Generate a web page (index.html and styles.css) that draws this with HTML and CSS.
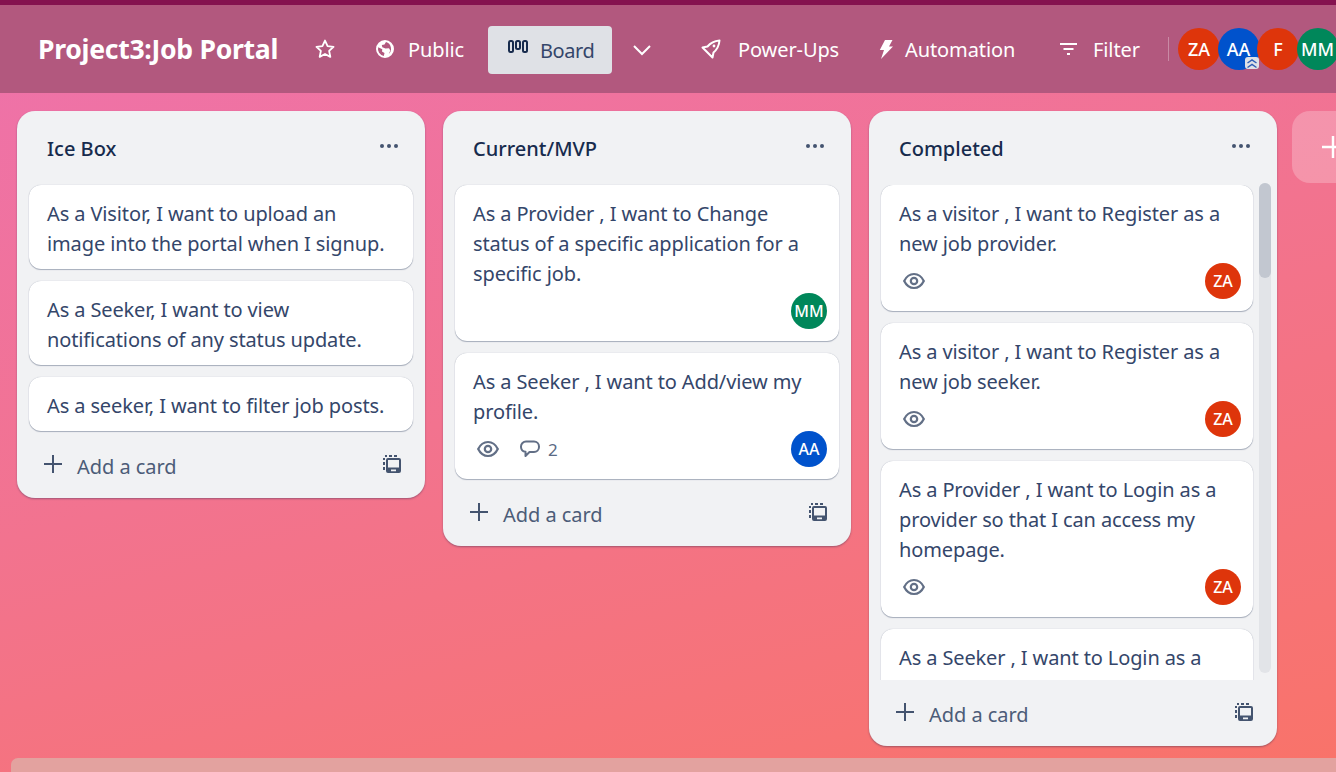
FILE: index.html
```html
<!DOCTYPE html>
<html lang="en">
<head>
<meta charset="utf-8">
<title>Project3:Job Portal</title>
<link rel="stylesheet" href="styles.css">
</head>
<body>
<svg class="defs" width="0" height="0" aria-hidden="true">
  <symbol id="eye" viewBox="0 0 24 24"><path d="M2.200 12c2.300-4.700 5.500-7 9.800-7s7.500 2.300 9.800 7c-2.300 4.700-5.500 7-9.800 7s-7.500-2.300-9.800-7Z" fill="none" stroke="currentColor" stroke-width="2.200"/><circle cx="12" cy="12" r="3.200" fill="none" stroke="currentColor" stroke-width="2.200"/></symbol>
  <symbol id="template" viewBox="0 0 18 18"><path d="M2 1h2M6 1h3M11 1h3M1 3v2M1 7v3M1 12v3" fill="none" stroke="currentColor" stroke-width="2"/><path d="M5 3h11a2 2 0 0 1 2 2v11a2 2 0 0 1-2 2H5a2 2 0 0 1-2-2V5a2 2 0 0 1 2-2Zm0 2v7.500h11V5Zm3 9.500v1.800h5v-1.800Z" fill="currentColor" fill-rule="evenodd"/></symbol>
  <symbol id="plus" viewBox="0 0 18 18"><path d="M9 0v18M0 9h18" stroke="currentColor" stroke-width="2" fill="none"/></symbol>
  <symbol id="dots" viewBox="0 0 20 6"><circle cx="3" cy="3" r="2" fill="currentColor"/><circle cx="10" cy="3" r="2" fill="currentColor"/><circle cx="17" cy="3" r="2" fill="currentColor"/></symbol>
</svg>

<header class="topbar">
  <h1 class="board-name">Project3:Job Portal</h1>
  <svg class="ico ico-star" viewBox="0 0 24 24"><path d="M12 2.800l2.800 6 6.500.8-4.800 4.500 1.300 6.500-5.800-3.200-5.800 3.200 1.300-6.500-4.800-4.500 6.500-.8Z" fill="none" stroke="currentColor" stroke-width="2" stroke-linejoin="round"/></svg>
  <div class="nav-item nav-public">
    <svg class="ico ico-globe" viewBox="0 0 20 20"><path fill="currentColor" fill-rule="evenodd" d="M10 1a9 9 0 1 1 0 18 9 9 0 0 1 0-18ZM3.200 8.200A7 7 0 0 0 8.800 16.900l.7-2.900-2.500-1.500.3-2.300ZM11 3.100l-1.500 2.400-2.700.6.500 2.200 3.200 1.200 3.500-.2 1.300 2.300-1.500 3.300A7 7 0 0 0 11 3.100Z"/></svg>
    <span>Public</span>
  </div>
  <div class="view-tab">
    <svg class="ico-board" viewBox="0 0 20 14"><rect x="1" y="1" width="4" height="11" rx="1.500"/><rect x="8" y="1" width="4" height="8" rx="1.500"/><rect x="15" y="1" width="4" height="11" rx="1.500"/></svg>
    <span>Board</span>
  </div>
  <svg class="ico-chevron" viewBox="0 0 20 12"><path d="M2 2l8 8 8-8" fill="none" stroke="currentColor" stroke-width="2"/></svg>
  <div class="nav-item nav-power">
    <svg class="ico ico-rocket" viewBox="0 0 20 20"><path d="M18.500 1.500C13 2 9 4.500 6.500 7.500l-5 1 4 4 2 2 4 4 1-5c3-2.500 5.500-6.500 6-12Z" fill="none" stroke="currentColor" stroke-width="2" stroke-linejoin="round"/><circle cx="13" cy="7" r="1.400" fill="currentColor"/></svg>
    <span>Power-Ups</span>
  </div>
  <div class="nav-item nav-auto">
    <svg class="ico-bolt" viewBox="0 0 14 19"><path d="M6 0h7.500L10 6.500h4L2 19l3-9H.8Z" fill="currentColor"/></svg>
    <span>Automation</span>
  </div>
  <div class="nav-item nav-filter">
    <svg class="ico-filter" viewBox="0 0 17 12"><path d="M0 1h17M3.500 6h10M7 11h3" fill="none" stroke="currentColor" stroke-width="1.800"/></svg>
    <span>Filter</span>
  </div>
  <div class="divider"></div>
  <div class="members">
    <div class="avatar big red">ZA</div>
    <div class="avatar big blue">AA
      <svg class="admin" viewBox="0 0 14 12"><rect width="14" height="12" rx="3" fill="#dfe1e6"/><path d="M2.500 6l4.500-3 4.500 3M2.500 10.500L7 7.500l4.500 3" fill="none" stroke="#2f5fb8" stroke-width="1.500"/></svg>
    </div>
    <div class="avatar big red">F</div>
    <div class="avatar big green">MM</div>
  </div>
</header>

<main class="board">
  <section class="list">
    <div class="list-head"><h2>Ice Box</h2><svg class="dots"><use href="#dots"/></svg></div>
    <div class="cards">
      <article class="card"><p>As a Visitor, I want to upload an image into the portal when I signup.</p></article>
      <article class="card"><p>As a Seeker, I want to view notifications of any status update.</p></article>
      <article class="card"><p>As a seeker, I want to filter job posts.</p></article>
    </div>
    <div class="list-foot"><svg class="plus"><use href="#plus"/></svg><span>Add a card</span><svg class="template"><use href="#template"/></svg></div>
  </section>

  <section class="list">
    <div class="list-head"><h2>Current/MVP</h2><svg class="dots"><use href="#dots"/></svg></div>
    <div class="cards">
      <article class="card"><p>As a Provider , I want to Change status of a specific application for a specific job.</p>
        <div class="badges"><div class="avatar green">MM</div></div></article>
      <article class="card"><p>As a Seeker , I want to Add/view my profile.</p>
        <div class="badges">
          <svg class="eye"><use href="#eye"/></svg>
          <svg class="comment" viewBox="0 0 20 18"><path d="M6 1.500h8a5 5 0 0 1 5 5v.5a5 5 0 0 1-5 5H9.500L5.500 16v-4.200A5 5 0 0 1 1 7v-.5a5 5 0 0 1 5-5Z" fill="none" stroke="currentColor" stroke-width="2" stroke-linejoin="round"/></svg>
          <span class="count">2</span>
          <div class="avatar blue">AA</div>
        </div></article>
    </div>
    <div class="list-foot"><svg class="plus"><use href="#plus"/></svg><span>Add a card</span><svg class="template"><use href="#template"/></svg></div>
  </section>

  <section class="list list-scroll">
    <div class="list-head"><h2>Completed</h2><svg class="dots"><use href="#dots"/></svg></div>
    <div class="scroll-row">
      <div class="cards clip">
        <article class="card"><p>As a visitor , I want to Register as a new job provider.</p>
          <div class="badges"><svg class="eye"><use href="#eye"/></svg><div class="avatar red">ZA</div></div></article>
        <article class="card"><p>As a visitor , I want to Register as a new job seeker.</p>
          <div class="badges"><svg class="eye"><use href="#eye"/></svg><div class="avatar red">ZA</div></div></article>
        <article class="card"><p>As a Provider , I want to Login as a provider so that I can access my homepage.</p>
          <div class="badges"><svg class="eye"><use href="#eye"/></svg><div class="avatar red">ZA</div></div></article>
        <article class="card"><p>As a Seeker , I want to Login as a seeker so that I can access my homepage.</p></article>
      </div>
      <div class="scrollbar"><div class="thumb"></div></div>
    </div>
    <div class="list-foot"><svg class="plus"><use href="#plus"/></svg><span>Add a card</span><svg class="template"><use href="#template"/></svg></div>
  </section>

  <div class="add-list"><svg class="add-plus"><use href="#plus"/></svg></div>
</main>

<div class="hscroll"></div>
</body>
</html>
```

FILE: styles.css
```css
* { box-sizing: border-box; }
html, body { margin: 0; height: 100%; }
body {
  width: 1336px;
  height: 772px;
  overflow: hidden;
  display: flex;
  flex-direction: column;
  font-family: "Noto Sans", "Open Sans", sans-serif;
  color: #34466a;
  background: linear-gradient(165deg, #ee72ac 0%, #f2738f 48%, #f97369 100%);
}
.defs { position: absolute; }

.topbar {
  flex: none;
  height: 93px;
  border-top: 5px solid #85124f;
  background: #b2587e;
  display: flex;
  align-items: center;
  color: #fff;
  padding: 0 0 0 38px;
  white-space: nowrap;
  overflow: hidden;
}
.board-name { margin: 0; font-size: 26.6px; font-weight: 700; letter-spacing: -0.3px; width: 276px; flex: none; }
.ico { display: block; flex: none; }
.ico-star { width: 22px; height: 22px; margin-right: 39px; }
.nav-item { display: flex; align-items: center; font-size: 20px; letter-spacing: -0.1px; flex: none; }
.ico-globe { width: 20px; height: 20px; margin-right: 13px; }
.nav-public { width: 113px; }
.view-tab {
  flex: none;
  width: 124px; height: 48px; border-radius: 4px;
  background: #dfe1e6; color: #34466a;
  display: flex; align-items: center; padding-left: 20px;
  font-size: 20px; letter-spacing: -0.4px;
  margin-top: 2px;
}
.ico-board { flex: none; width: 20px; height: 14px; margin: -6px 12px 0 0; fill: none; stroke: #172b4d; stroke-width: 2; }
.ico-chevron { flex: none; width: 20px; height: 12px; margin: 2px 49px 0 20px; }
.ico-rocket { width: 20px; height: 20px; margin-right: 17px; }
.nav-power { width: 178px; }
.ico-bolt { flex: none; width: 14px; height: 19px; margin-right: 12px; }
.nav-auto { width: 181px; }
.ico-filter { flex: none; width: 17px; height: 12px; margin-right: 16px; }
.nav-filter { width: 108px; }
.divider { flex: none; width: 1px; height: 24px; background: rgba(255,255,255,.3); margin-right: 9px; }
.members { display: flex; flex: none; }
.avatar {
  flex: none;
  width: 36px; height: 36px; border-radius: 50%;
  color: #fff; font-size: 16px; font-weight: 500;
  display: flex; align-items: center; justify-content: center;
  margin-left: auto;
}
.avatar.big { width: 42px; height: 42px; font-size: 18px; font-weight: 500; position: relative; margin: 0 -2.500px 0 0; }
.avatar.red { background: #de350b; }
.avatar.blue { background: #0052cc; }
.avatar.green { background: #00875a; }
.admin { position: absolute; right: 1px; bottom: 1px; width: 14px; height: 12px; }

.board {
  flex: 1;
  min-height: 0;
  display: flex;
  align-items: flex-start;
  gap: 18px;
  padding: 18px 0 0 17px;
}
.list {
  flex: none;
  width: 408px;
  background: #f1f2f4;
  border-radius: 18px;
  box-shadow: 0 1px 2px rgba(9,30,66,.35);
  display: flex;
  flex-direction: column;
}
.list-head { height: 74px; padding: 0 26px 0 30px; display: flex; align-items: center; justify-content: space-between; }
.list-head h2 { margin: 0; font-size: 20px; font-weight: 500; color: #172b4d; letter-spacing: 0; }
.dots { width: 20px; height: 6px; color: #44546f; margin-top: -5px; }
.cards { padding: 0 12px; display: flex; flex-direction: column; gap: 12px; }
.card {
  flex: none;
  background: #fff;
  border-radius: 12px;
  box-shadow: 0 1px 1px rgba(9,30,66,.3), 0 0 1px rgba(9,30,66,.3);
  padding: 14px 12px 10px 18px;
}
.card p { margin: 0; padding-right: 10px; font-size: 20px; line-height: 30px; letter-spacing: -0.12px; }
.badges { display: flex; align-items: center; height: 34px; margin-top: 5px; margin-bottom: 3px; color: #5a6a85; }
.eye { flex: none; width: 24px; height: 24px; margin-left: 3px; color: #626f86; }
.comment { flex: none; width: 20px; height: 18px; margin-left: 20px; color: #626f86; }
.count { font-size: 17px; margin-left: 8px; }
.list-foot { flex: none; height: 67px; display: flex; align-items: center; padding: 3px 22px 0 27px; color: #4c5c78; font-size: 20px; letter-spacing: -0.05px; }
.plus { flex: none; width: 18px; height: 18px; margin-right: 15px; margin-top: -4px; color: #44546f; }
.template { flex: none; width: 18px; height: 18px; margin-left: auto; margin-top: -5px; margin-right: 2px; color: #44546f; }

.list-scroll { height: 635px; }
.list-scroll .list-foot { height: 66px; padding-top: 2px; }
.scroll-row { flex: 1; min-height: 0; display: flex; }
.cards.clip { width: 390px; padding-right: 6px; overflow: hidden; }
.scrollbar { flex: none; width: 12px; height: 490px; margin-top: -2px; border-radius: 6px; background: #e2e4e8; }
.thumb { height: 95px; border-radius: 6px; background: #c2c7d0; }

.add-list {
  flex: none;
  width: 60px; height: 72px;
  margin-left: -3px;
  border-radius: 18px 0 0 18px;
  background: rgba(255,255,255,.24);
  color: #fff;
  display: flex; align-items: center; padding-left: 30px;
}
.add-plus { width: 22px; height: 22px; flex: none; }

.hscroll { flex: none; height: 14px; margin-left: 11px; border-radius: 7px 0 0 0; background: #e3a29f; }
```
